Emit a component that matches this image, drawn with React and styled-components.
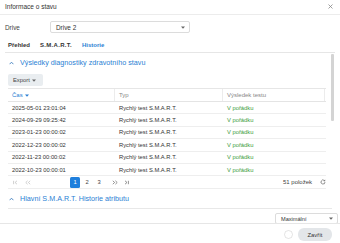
import React from "react";
import styled, { createGlobalStyle } from "styled-components";

const GlobalStyle = createGlobalStyle`
  html, body { margin: 0; padding: 0; background: #fff; }
  body { font-family: "Liberation Sans", Arial, sans-serif; color: #333; }
  * { box-sizing: border-box; }
`;

const Dialog = styled.div`
  width: 340px;
  height: 243px;
  display: flex;
  flex-direction: column;
  background: #fff;
  overflow: hidden;
  position: relative;
`;

const Header = styled.div`
  height: 15px;
  flex: none;
  display: flex;
  align-items: center;
  justify-content: space-between;
  padding: 0 7px 1px 5px;
  border-bottom: 1px solid #ececec;
`;

const Title = styled.div`
  font-size: 6.5px;
  color: #333;
`;

const CloseBtn = styled.div`
  width: 5px;
  height: 5px;
  display: flex;
  svg { display: block; }
`;

const DriveRow = styled.div`
  display: flex;
  align-items: center;
  height: 12px;
  margin-top: 6px;
  padding-left: 5px;
  flex: none;
`;

const Label = styled.div`
  width: 45px;
  font-size: 6.4px;
  color: #444;
`;

const Select = styled.div`
  width: ${(p) => p.$w}px;
  height: ${(p) => p.$h}px;
  border: 1px solid #dcdcdc;
  border-radius: 2px;
  display: flex;
  align-items: center;
  justify-content: space-between;
  padding: 0 4px 0 5px;
  font-size: ${(p) => p.$fs}px;
  color: #333;
  background: #fff;
`;

const Caret = () => (
  <svg width="4" height="3" viewBox="0 0 4 3">
    <polygon points="0,0.5 4,0.5 2,2.7" fill="#666" />
  </svg>
);

const Tabs = styled.div`
  display: flex;
  align-items: center;
  gap: 10px;
  height: 15px;
  margin: 5px 5px 0 5px;
  padding: 0 0 1px 3px;
  border-bottom: 1px solid #e6e6e6;
  flex: none;
`;

const Tab = styled.div`
  font-size: 6px;
  font-weight: 700;
  color: ${(p) => (p.$active ? "#2b7fd4" : "#333")};
  letter-spacing: ${(p) => (p.$spaced ? "0.3px" : "0")};
`;

const Content = styled.div`
  flex: 1;
  position: relative;
  overflow: hidden;
  padding: 0 8px 0 8px;
`;

const ScrollThumb = styled.div`
  position: absolute;
  right: 6px;
  top: 1px;
  width: 3px;
  height: 67px;
  background: #d4d4d4;
  border-radius: 1px;
`;

const SectionHeader = styled.div`
  display: flex;
  align-items: center;
  gap: 6px;
  height: ${(p) => p.$h}px;
  color: #2b7fd4;
  font-size: 7.2px;
  border-bottom: ${(p) => (p.$line ? "1px solid #e8e8e8" : "none")};
  padding-left: 1px;
  margin-top: ${(p) => p.$mt || 0}px;
`;

const Chevron = () => (
  <svg width="5" height="4" viewBox="0 0 5 4">
    <polyline points="0.6,3.2 2.5,1.2 4.4,3.2" fill="none" stroke="#3f7fbf" strokeWidth="0.9" />
  </svg>
);

const ExportBtn = styled.div`
  width: 35px;
  height: 12px;
  margin-top: 2px;
  background: #e9edf0;
  border-radius: 2px;
  display: flex;
  align-items: center;
  padding-left: 5px;
  gap: 2px;
  font-size: 5.8px;
  color: #444;
`;

const Table = styled.div`
  margin-top: 2px;
  width: 318px;
  border-top: 1px solid #e6e6e6;
`;

const Row = styled.div`
  display: grid;
  grid-template-columns: 107px 108px 102px 1fr;
  height: ${(p) => p.$h}px;
  align-items: center;
  border-bottom: 1px solid ${(p) => (p.$head ? "#e4e4e4" : "#eeeeee")};
  font-size: ${(p) => (p.$head ? 6 : 5.8)}px;
`;

const Cell = styled.div`
  height: 100%;
  display: flex;
  align-items: center;
  gap: 2px;
  padding-left: ${(p) => p.$pl}px;
  color: ${(p) => p.$color || "#333"};
  border-right: ${(p) => (p.$div ? "1px solid #ececec" : "none")};
`;

const Pager = styled.div`
  display: flex;
  align-items: center;
  height: 13px;
  width: 318px;
  border-bottom: 1px solid #eeeeee;
  padding-left: 5px;
  font-size: 5.8px;
  color: #555;
`;

const PageIcon = styled.div`
  display: flex;
  align-items: center;
  margin-right: ${(p) => p.$mr}px;
  margin-left: ${(p) => p.$ml || 0}px;
  svg { display: block; }
`;

const PageNum = styled.div`
  width: 10px;
  height: 11px;
  display: flex;
  align-items: center;
  justify-content: center;
  border-radius: 1.5px;
  margin-right: 2px;
  background: ${(p) => (p.$active ? "#1f7fdc" : "transparent")};
  color: ${(p) => (p.$active ? "#fff" : "#444")};
`;

const Spacer = styled.div`
  flex: 1;
`;

const Count = styled.div`
  margin-right: 8px;
  font-size: 6px;
  color: #444;
`;

const RightRow = styled.div`
  display: flex;
  justify-content: flex-end;
  margin-top: 4px;
  margin-right: -6px;
`;

const Footer = styled.div`
  height: 20px;
  flex: none;
  border-top: 1px solid #e6e6e6;
  display: flex;
  align-items: center;
  justify-content: flex-end;
  padding: 2px 8px 0 0;
  position: relative;
`;

const Button = styled.div`
  height: 13px;
  width: 34px;
  border-radius: 6px;
  background: #e3e6e9;
  display: flex;
  align-items: center;
  justify-content: center;
  font-size: 5.8px;
  color: #333;
  position: relative;
`;

const Watermark = styled.div`
  position: absolute;
  right: 47px;
  top: 6px;
  width: 9px;
  height: 9px;
  border-radius: 50%;
  border: 1.5px solid rgba(205, 205, 205, 0.55);
`;

const FirstIcon = ({ c }) => (
  <svg width="5" height="5" viewBox="0 0 5 5">
    <line x1="0.6" y1="0.8" x2="0.6" y2="4.2" stroke={c} strokeWidth="0.7" />
    <polyline points="4,0.8 2,2.5 4,4.2" fill="none" stroke={c} strokeWidth="0.7" />
  </svg>
);
const LastIcon = ({ c }) => (
  <svg width="5" height="5" viewBox="0 0 5 5">
    <line x1="4.4" y1="0.8" x2="4.4" y2="4.2" stroke={c} strokeWidth="0.7" />
    <polyline points="1,0.8 3,2.5 1,4.2" fill="none" stroke={c} strokeWidth="0.7" />
  </svg>
);
const PrevIcon = ({ c }) => (
  <svg width="6" height="5" viewBox="0 0 6 5">
    <polyline points="2.6,0.8 0.8,2.5 2.6,4.2" fill="none" stroke={c} strokeWidth="0.7" />
    <polyline points="5.2,0.8 3.4,2.5 5.2,4.2" fill="none" stroke={c} strokeWidth="0.7" />
  </svg>
);
const NextIcon = ({ c }) => (
  <svg width="6" height="5" viewBox="0 0 6 5">
    <polyline points="0.8,0.8 2.6,2.5 0.8,4.2" fill="none" stroke={c} strokeWidth="0.7" />
    <polyline points="3.4,0.8 5.2,2.5 3.4,4.2" fill="none" stroke={c} strokeWidth="0.7" />
  </svg>
);
const RefreshIcon = () => (
  <svg width="6" height="6" viewBox="0 0 12 12">
    <path d="M10 6a4 4 0 1 1-1.2-2.85" fill="none" stroke="#666" strokeWidth="1.4" />
    <polygon points="10.4,1.2 10.4,4.6 7,4.6" fill="#666" />
  </svg>
);

const rows = [
  "2025-05-01 23:01:04",
  "2024-09-29 09:25:42",
  "2023-01-23 00:00:02",
  "2022-12-23 00:00:02",
  "2022-11-23 00:00:02",
  "2022-10-23 00:00:01",
];

export default function App() {
  return (
    <Dialog>
      <GlobalStyle />
      <Header>
        <Title>Informace o stavu</Title>
        <CloseBtn>
          <svg width="5" height="5" viewBox="0 0 5 5">
            <line x1="0.5" y1="0.5" x2="4.5" y2="4.5" stroke="#888" strokeWidth="0.8" />
            <line x1="4.5" y1="0.5" x2="0.5" y2="4.5" stroke="#888" strokeWidth="0.8" />
          </svg>
        </CloseBtn>
      </Header>
      <DriveRow>
        <Label>Drive</Label>
        <Select $w={140} $h={12} $fs={6.4}>
          <span>Drive 2</span>
          <Caret />
        </Select>
      </DriveRow>
      <Tabs>
        <Tab>Přehled</Tab>
        <Tab $spaced>S.M.A.R.T.</Tab>
        <Tab $active>Historie</Tab>
      </Tabs>
      <Content>
        <ScrollThumb />
        <SectionHeader $h={19}>
          <Chevron />
          <span>Výsledky diagnostiky zdravotního stavu</span>
        </SectionHeader>
        <ExportBtn>
          Export <Caret />
        </ExportBtn>
        <Table>
          <Row $head $h={13}>
            <Cell $pl={4} $color="#2b7fd4" $div>
              Čas
              <svg width="4" height="3" viewBox="0 0 4 3">
                <polygon points="0,0.5 4,0.5 2,2.7" fill="#2b7fd4" />
              </svg>
            </Cell>
            <Cell $pl={4} $color="#888" $div>Typ</Cell>
            <Cell $pl={4} $color="#888" $div>Výsledek testu</Cell>
            <Cell />
          </Row>
          {rows.map((d) => (
            <Row key={d} $h={12.4}>
              <Cell $pl={4}>{d}</Cell>
              <Cell $pl={4}>Rychlý test S.M.A.R.T.</Cell>
              <Cell $pl={4} $color="#3a9e3a">V pořádku</Cell>
              <Cell />
            </Row>
          ))}
        </Table>
        <Pager>
          <PageIcon $mr={7}><FirstIcon c="#bbb" /></PageIcon>
          <PageIcon $mr={39}><PrevIcon c="#bbb" /></PageIcon>
          <PageNum $active>1</PageNum>
          <PageNum>2</PageNum>
          <PageNum>3</PageNum>
          <PageIcon $mr={6} $ml={6}><NextIcon c="#666" /></PageIcon>
          <PageIcon $mr={0}><LastIcon c="#666" /></PageIcon>
          <Spacer />
          <Count>51 položek</Count>
          <PageIcon $mr={0}><RefreshIcon /></PageIcon>
        </Pager>
        <SectionHeader $h={20} $line>
          <Chevron />
          <span>Hlavní S.M.A.R.T. Historie atributu</span>
        </SectionHeader>
        <RightRow>
          <Select $w={63} $h={11} $fs={5.6}>
            <span>Maximální</span>
            <Caret />
          </Select>
        </RightRow>
      </Content>
      <Footer>
        <Watermark />
        <Button>Zavřít</Button>
      </Footer>
    </Dialog>
  );
}
